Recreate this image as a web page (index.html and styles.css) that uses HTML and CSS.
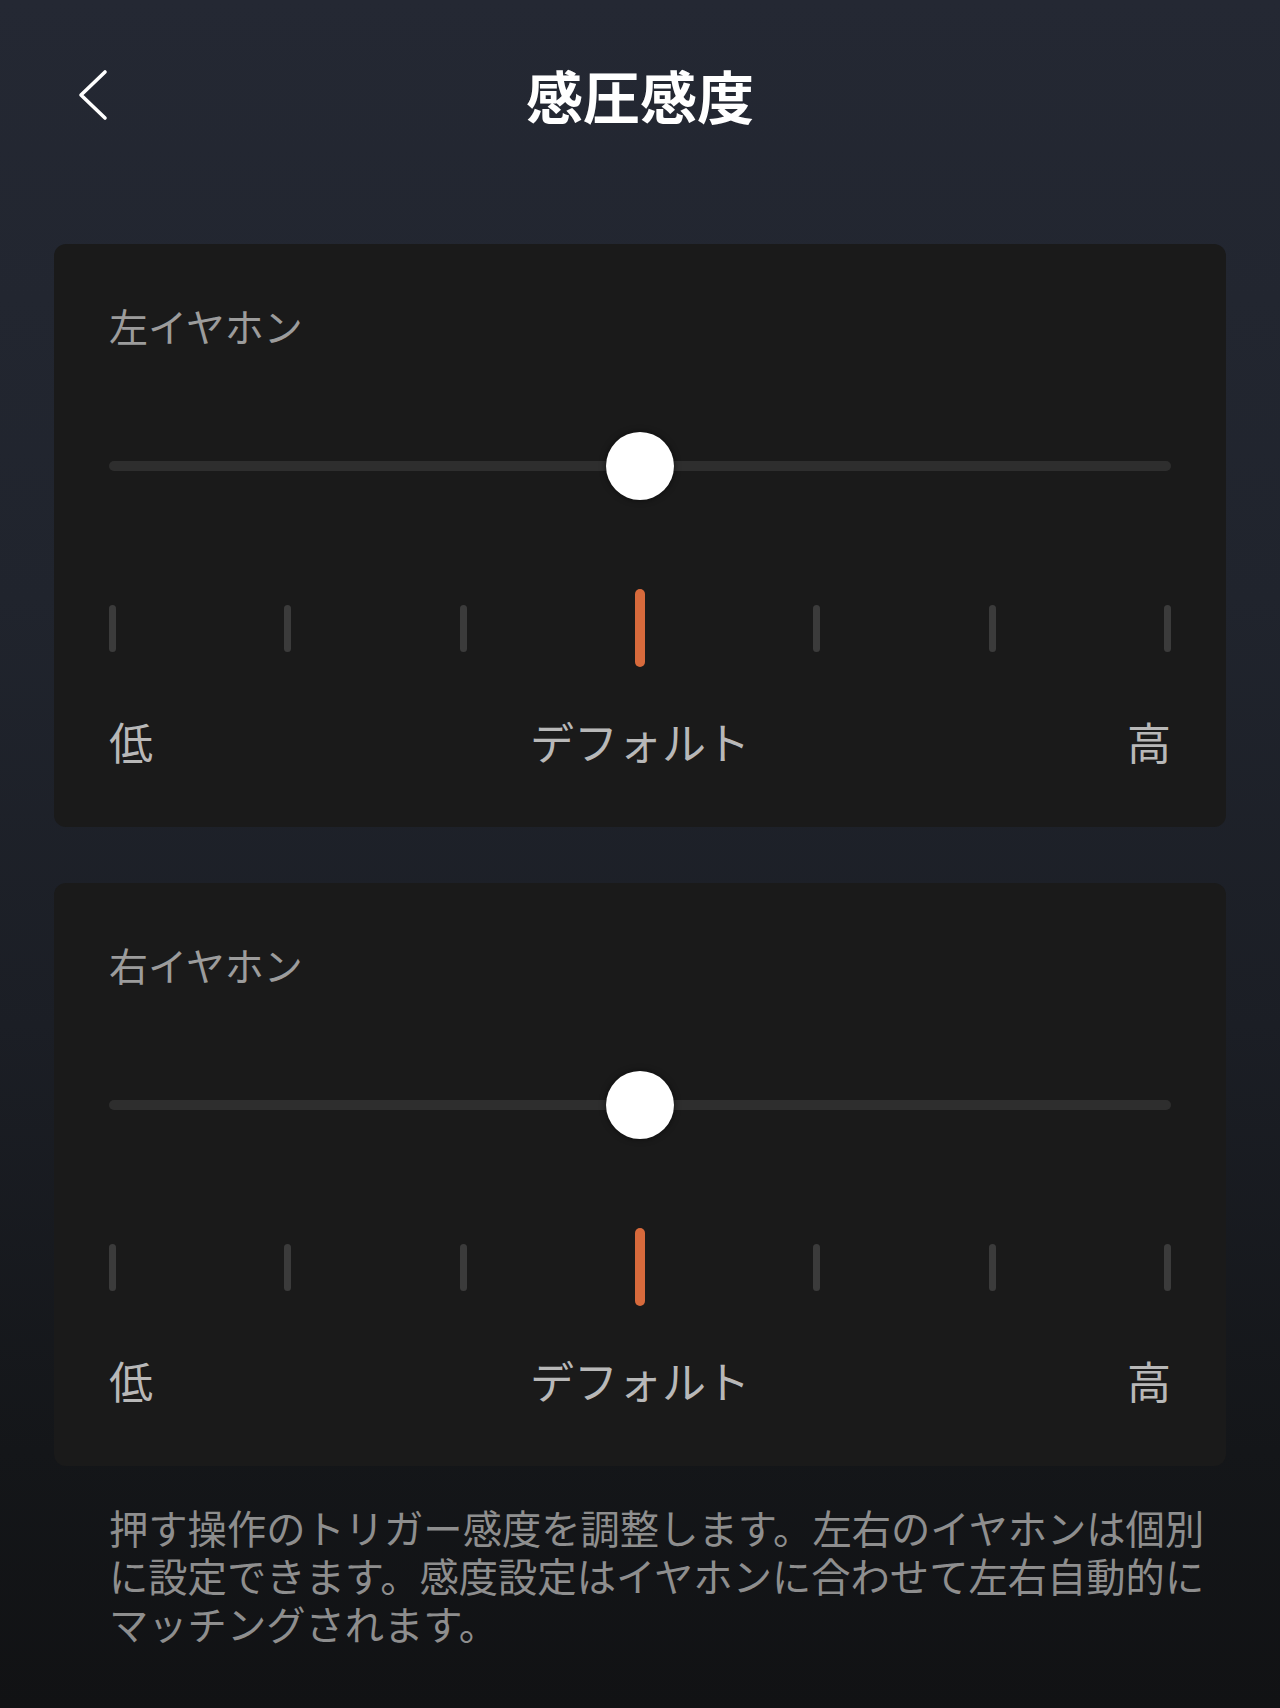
FILE: index.html
```html
<!DOCTYPE html>
<html lang="ja">
<head>
<meta charset="utf-8">
<title>感圧感度</title>
<link rel="stylesheet" href="styles.css">
</head>
<body>
<div class="page">
  <header class="header">
    <button class="back" aria-label="戻る">
      <svg width="34" height="52" viewBox="0 0 34 52"><path d="M29 3 L5 26 L29 49" fill="none" stroke="#ffffff" stroke-width="3.6" stroke-linecap="round" stroke-linejoin="round"/></svg>
    </button>
    <h1 class="title">感圧感度</h1>
    <span class="spacer"></span>
  </header>

  <main class="cards">
    <section class="card">
      <div class="card-label">左イヤホン</div>
      <div class="slider">
        <div class="track"></div>
        <div class="thumb" style="left: 50%"></div>
      </div>
      <div class="ticks">
        <span class="tick"></span><span class="tick"></span><span class="tick"></span><span class="tick active"></span><span class="tick"></span><span class="tick"></span><span class="tick"></span>
      </div>
      <div class="scale">
        <span>低</span><span>デフォルト</span><span>高</span>
      </div>
    </section>

    <section class="card">
      <div class="card-label">右イヤホン</div>
      <div class="slider">
        <div class="track"></div>
        <div class="thumb" style="left: 50%"></div>
      </div>
      <div class="ticks">
        <span class="tick"></span><span class="tick"></span><span class="tick"></span><span class="tick active"></span><span class="tick"></span><span class="tick"></span><span class="tick"></span>
      </div>
      <div class="scale">
        <span>低</span><span>デフォルト</span><span>高</span>
      </div>
    </section>
  </main>

  <p class="desc">押す操作のトリガー感度を調整します。左右のイヤホンは個別に設定できます。感度設定はイヤホンに合わせて左右自動的にマッチングされます。</p>
</div>
</body>
</html>
```

FILE: styles.css
```css
* { box-sizing: border-box; }
html, body { margin: 0; padding: 0; }
body {
  width: 1280px;
  min-height: 1708px;
  background: linear-gradient(180deg, #242833 0%, #20242d 35%, #1b1e25 60%, #141619 85%, #111214 100%);
  font-family: "Noto Sans CJK JP", "Noto Sans", sans-serif;
  color: #ffffff;
}
.page {
  padding: 0 54px;
  min-height: 1708px;
}
.header {
  height: 196px;
  display: grid;
  grid-template-columns: 1fr auto 1fr;
  align-items: center;
}
.back {
  justify-self: start;
  margin-left: 22px;
  margin-top: -6px;
  background: none;
  border: 0;
  padding: 0;
  display: flex;
  cursor: pointer;
}
.title {
  margin: -8px 0 0 0;
  font-size: 57px;
  font-weight: 700;
  line-height: 1;
  color: #ffffff;
  letter-spacing: 0;
}
.cards {
  margin-top: 48px;
  display: flex;
  flex-direction: column;
  gap: 56px;
}
.card {
  background: #1a1a1a;
  border-radius: 12px;
  height: 583px;
  padding: 55px 55px 0 55px;
  display: flex;
  flex-direction: column;
}
.card-label {
  font-size: 39px;
  line-height: 52px;
  color: #9c9c9c;
}
.slider {
  position: relative;
  margin-top: 81px;
  height: 68px;
  display: flex;
  align-items: center;
}
.track {
  width: 100%;
  height: 10px;
  border-radius: 5px;
  background: #2e2e2e;
}
.thumb {
  position: absolute;
  top: 0;
  width: 68px;
  height: 68px;
  margin-left: -34px;
  border-radius: 50%;
  background: #ffffff;
  box-shadow: 0 0 6px rgba(0,0,0,0.55);
}
.ticks {
  margin-top: 89px;
  height: 78px;
  display: flex;
  justify-content: space-between;
  align-items: center;
}
.tick {
  width: 7px;
  height: 47px;
  border-radius: 4px;
  background: #3b3b3b;
}
.tick.active {
  width: 10px;
  height: 78px;
  border-radius: 5px;
  background: #d76a3c;
}
.scale {
  margin-top: 44px;
  display: flex;
  justify-content: space-between;
  font-size: 44px;
  line-height: 60px;
  color: #b8b8b8;
}
.desc {
  margin: 37px 0 0 0;
  padding: 0 14px 0 55px;
  font-size: 39.3px;
  line-height: 48px;
  color: #8e8e8e;
}
```
